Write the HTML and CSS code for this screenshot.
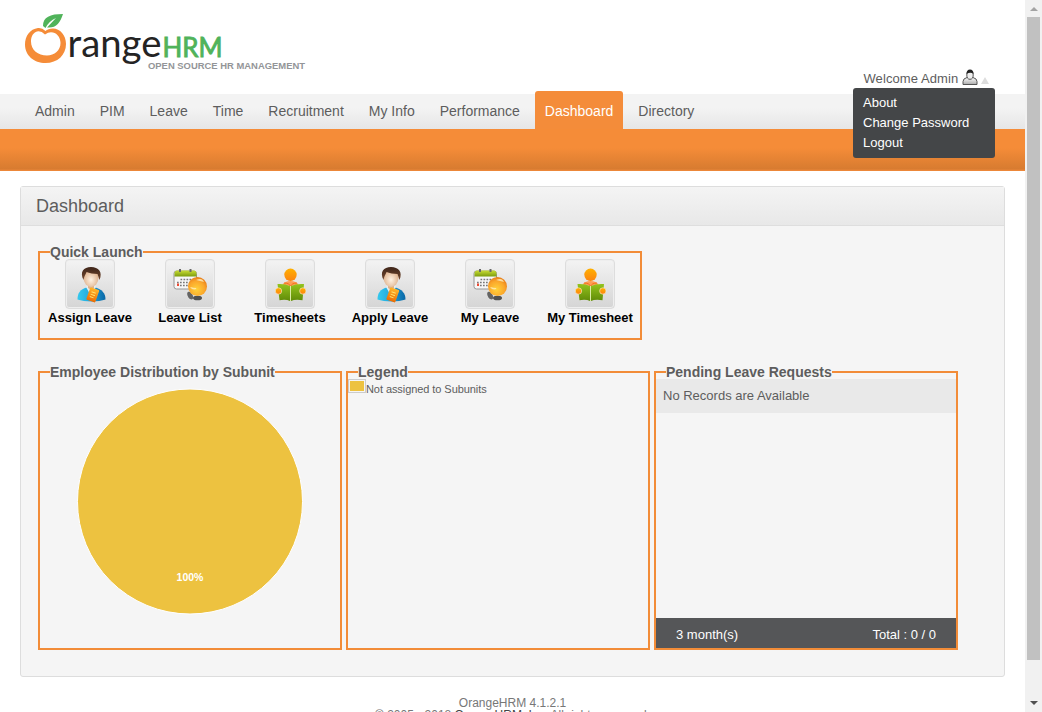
FILE: index.html
```html
<!DOCTYPE html>
<html lang="en">
<head>
<meta charset="utf-8">
<title>OrangeHRM</title>
<link rel="stylesheet" href="styles.css">
</head>
<body>
<svg class="defs" width="0" height="0" aria-hidden="true">
  <defs>
    <linearGradient id="blue"><stop offset="0" stop-color="#35c9ee"/><stop offset=".45" stop-color="#22a8dd"/><stop offset="1" stop-color="#0966a5"/></linearGradient>
    <radialGradient id="face" cx=".5" cy=".6" r=".6"><stop offset="0" stop-color="#fff3e4"/><stop offset="1" stop-color="#dba981"/></radialGradient>
    <linearGradient id="hair" x2="0" y2="1"><stop offset="0" stop-color="#3e2519"/><stop offset="1" stop-color="#75492f"/></linearGradient>
    <linearGradient id="tag" x2="0" y2="1"><stop offset="0" stop-color="#ffb52b"/><stop offset="1" stop-color="#ea6c05"/></linearGradient>
    <linearGradient id="lime" x2="0" y2="1"><stop offset="0" stop-color="#c9dd36"/><stop offset="1" stop-color="#7b9c0c"/></linearGradient>
    <radialGradient id="ball" cx=".45" cy=".65" r=".65"><stop offset="0" stop-color="#ffd23b"/><stop offset=".65" stop-color="#fba72b"/><stop offset="1" stop-color="#e77d19"/></radialGradient>
    <linearGradient id="book" x2="0" y2="1"><stop offset="0" stop-color="#94c41d"/><stop offset="1" stop-color="#608a08"/></linearGradient>
    <linearGradient id="sun" x2="0" y2="1"><stop offset="0" stop-color="#ffb000"/><stop offset="1" stop-color="#fc8410"/></linearGradient>
    <linearGradient id="user" x2="0" y2="1"><stop offset="0" stop-color="#fff"/><stop offset="1" stop-color="#aaa"/></linearGradient>
    <symbol id="person" viewBox="0 0 48 48">
      <path d="M11.500 39.500c0-7 3-10 9-12h9c6 2 10 5 10 12-7 2.500-21 2.500-28 0z" fill="url(#blue)"/>
      <path d="M20 27l5 9 5-9-2-3h-6z" fill="#e5eef2"/>
      <path d="M22 22h6v6l-3 2-3-2z" fill="#dfb189"/>
      <ellipse cx="25" cy="18" rx="7.500" ry="9" fill="url(#face)"/>
      <path d="M17.500 20c-4-8 0-13 7.500-13s12 5 8.500 13l-2-6c-4 0-8-1-11-2-1 3-2 3-3 8z" fill="url(#hair)"/>
      <g transform="rotate(20 27 35)"><rect x="22" y="28.500" width="9.500" height="13" rx="1" fill="url(#tag)"/><path d="M24.500 32.500h4.500M24.500 35h4.500M24.500 37.500h4" stroke="#ffe36e" stroke-width="1"/></g>
    </symbol>
    <symbol id="calendar" viewBox="0 0 48 48">
      <rect x="8" y="11" width="22.500" height="18" rx="2.500" fill="#f7f7f7" stroke="#969696"/>
      <path d="M8.500 16.500v-3q0-3 3-3h16q3 0 3 3v3z" fill="url(#lime)"/>
      <path d="M14 9v3M24.500 9v3" stroke="#686868" stroke-width="2"/>
      <path d="M14.500 19.500h13M11 22.500h15M14 25.500h8" stroke="#777" stroke-width="1.400" stroke-dasharray="1.700 1.300"/>
      <rect x="11" y="23.500" width="2" height="2.500" fill="#ec4b35"/>
      <path d="M22 32c2-1 4 1 5 4s-1 4-3 3-4-6-2-7z" fill="#646464"/><ellipse cx="31.500" cy="38" rx="4.500" ry="2.300" fill="#515151"/>
      <circle cx="31.500" cy="26.500" r="9.500" fill="url(#ball)"/>
      <path d="M24.500 27q3 1 6 1-1 3-6 0zM30 20q6-3 8 2" fill="#fff0be" opacity=".8"/>
    </symbol>
    <symbol id="reader" viewBox="0 0 48 48">
      <circle cx="24.500" cy="14.800" r="6.200" fill="url(#sun)"/>
      <path d="M16.500 25q2-4 8-4t8 4l-8 1z" fill="#ff9d55"/><path d="M18 23q6 0 6.500 4 1-4 6.500-4" fill="none" stroke="#f2711a"/>
      <path d="M11.500 24q7.500-.5 12.500 2v15q-4-2-10.500-.8zM38 24q-8-.5-13 2v15q4-2 11.500-.8z" fill="url(#book)"/>
      <path d="M24.500 26v15" stroke="#dceba7"/>
      <circle cx="12.500" cy="31" r="3.200" fill="url(#sun)" stroke="#f5f0d7" stroke-width=".6"/><circle cx="36.800" cy="31" r="3.200" fill="url(#sun)" stroke="#f5f0d7" stroke-width=".6"/>
    </symbol>
  </defs>
</svg>
<div class="page">
  <header class="top">
    <svg class="logo" width="300" height="70" viewBox="20 5 300 70">
      <path fill-rule="evenodd" fill="#f58c38" d="M38 28C30 29 25 36 25 44.500 25 55.500 34 63 45.500 63 57.500 63 66 55 66 44 66 35 60 28.500 53 28.500Q48 28.500 45.500 31 42 27.500 38 28zM37 31.500Q41 30.500 45 34.500 49 31.500 53 32.500C57.500 33.500 60.500 38 60.500 43 60.500 50.500 54.500 55.500 47 55.500 38 55.500 31 50 31 41.500 31 36 33.500 32.500 37 31.500z"/>
      <path fill="#50b35a" d="M43 26C43 17 50 14 63 14 60 23 56 28.500 47 27.500L56 18Q49 21 45.500 28z"/>
      <text x="67.500" y="57" class="logo-range" textLength="94" lengthAdjust="spacingAndGlyphs">range</text>
      <text x="162.500" y="56.500" class="logo-hrm" textLength="60" lengthAdjust="spacingAndGlyphs">HRM</text>
      <text x="148" y="68.500" class="logo-tag" textLength="157" lengthAdjust="spacingAndGlyphs">OPEN SOURCE HR MANAGEMENT</text>
    </svg>
    <div class="account">
      <span>Welcome Admin</span>
      <svg class="user" width="16" height="17" viewBox="0 0 16 17"><path d="M1 15.500v-3q0-3 4-4h6q4 1 4 4v3z" fill="url(#user)" stroke="#555"/><ellipse cx="8" cy="6" rx="3.200" ry="4.300" fill="#eee" stroke="#555"/><path d="M4.500 5q0-4.500 3.500-4.500t3.500 4.500q-3-2.500-7 0z" fill="#222"/></svg>
      <i class="caret"></i>
      <div class="menu"><a>About</a><a>Change Password</a><a>Logout</a></div>
    </div>
  </header>
  <nav class="nav"><a>Admin</a><a>PIM</a><a>Leave</a><a>Time</a><a>Recruitment</a><a>My Info</a><a>Performance</a><a class="active">Dashboard</a><a>Directory</a></nav>
  <div class="band"></div>
  <main class="panel">
    <h1>Dashboard</h1>
    <div class="content">
      <section class="box quick"><h2>Quick Launch</h2>
        <a class="launch"><svg class="tile"><use href="#person"/></svg><span>Assign Leave</span></a>
        <a class="launch"><svg class="tile"><use href="#calendar"/></svg><span>Leave List</span></a>
        <a class="launch"><svg class="tile"><use href="#reader"/></svg><span>Timesheets</span></a>
        <a class="launch"><svg class="tile"><use href="#person"/></svg><span>Apply Leave</span></a>
        <a class="launch"><svg class="tile"><use href="#calendar"/></svg><span>My Leave</span></a>
        <a class="launch"><svg class="tile"><use href="#reader"/></svg><span>My Timesheet</span></a>
      </section>
      <div class="widgets">
        <section class="box"><h2>Employee Distribution by Subunit</h2>
          <svg class="pie" width="300" height="275" viewBox="0 0 300 275"><circle cx="150" cy="128.500" r="112.500" fill="#edc240" stroke="#fff" stroke-width="1"/><text x="150" y="208" text-anchor="middle">100%</text></svg>
        </section>
        <section class="box"><h2>Legend</h2><div class="key"><i class="swatch"></i>Not assigned to Subunits</div></section>
        <section class="box pending"><h2>Pending Leave Requests</h2><div class="empty">No Records are Available</div><div class="totals"><span>3 month(s)</span><span>Total : 0 / 0</span></div></section>
      </div>
    </div>
  </main>
  <footer class="footer">OrangeHRM 4.1.2.1<br>© 2005 - 2018 <a>OrangeHRM, Inc</a>. All rights reserved.</footer>
</div>
<div class="scrollbar"><i class="up"></i><div class="thumb"></div><i class="down"></i></div>
</body>
</html>
```
FILE: styles.css
```css
* { box-sizing: border-box; }
body { margin: 0; width: 1042px; height: 712px; overflow: hidden; display: flex; background: #fff; color: #5d5d5d; font-family: "Liberation Sans", Arial, sans-serif; }
.defs { position: absolute; }
.page { width: 1025px; height: 712px; overflow: hidden; }
.top { height: 94px; display: flex; justify-content: space-between; padding: 5px 30px 0 20px; }
.logo-range { font: 39px Lato, sans-serif; fill: #242424; }
.logo-hrm { font: 26px Lato, sans-serif; fill: #50b35a; stroke: #50b35a; stroke-width: .9; }
.logo-tag { font: bold 9.5px "Liberation Sans", sans-serif; fill: #939598; }
.account { position: relative; width: 142px; height: 83px; padding: 64px 0 0 10.5px; display: flex; align-items: flex-start; font-size: 13px; line-height: 19px; letter-spacing: .08px; white-space: nowrap; }
.user { margin: 0 0 0 4px; flex: none; }
.caret { margin: 8px 0 0 3px; border: 4px solid transparent; border-top: 0; border-bottom: 7px solid #ddd; }
.menu { position: absolute; left: 0; top: 83px; width: 142px; height: 70px; padding: 5px 10px; background: #444648; border-radius: 3px; color: #fff; z-index: 2; letter-spacing: 0; }
.menu a { display: block; line-height: 20px; }
.nav { height: 35px; padding-left: 25px; display: flex; align-items: flex-end; gap: 5px; background: linear-gradient(#f3f3f3 40%, #e6e6e6); font-size: 14px; }
.nav a { padding: 0 10px; height: 38px; line-height: 40px; flex: none; }
.nav .active { background: #f48c3a; color: #fff; border-radius: 3px 3px 0 0; }
.band { height: 42px; background: linear-gradient(#f58c38 45%, #d77b30 96%, #ec8739 97%); }
.panel { width: 985px; height: 491px; margin: 15px 0 0 20px; border: 1px solid #ddd; border-radius: 3px; background: #f5f5f5; }
.panel h1 { margin: 0; height: 39px; padding-left: 15px; border-bottom: 1px solid #dedede; font-size: 18px; font-weight: normal; line-height: 38px; background: linear-gradient(#f4f4f4, #e8e8e8); }
.content { padding: 25px 0 0 17px; }
.box { position: relative; border: 2px solid #f28c38; width: 304px; height: 279px; }
.box h2 { position: absolute; left: 10px; top: -8px; margin: 0; background: #f5f5f5; font-size: 14px; line-height: 14px; white-space: nowrap; }
.quick { width: 604px; height: 89px; display: flex; }
.launch { width: 100px; padding-top: 6px; display: flex; flex-direction: column; align-items: center; color: #000; font-size: 13px; font-weight: bold; white-space: nowrap; }
.tile { width: 50px; height: 50px; border: 1px solid #ddd; border-radius: 4px; background: linear-gradient(#f3f3f3, #d5d5d5); box-shadow: inset 0 0 0 1px #eee; }
.launch span { line-height: 18px; }
.widgets { display: flex; gap: 4px; margin-top: 31px; }
.pie { display: block; }
.pie text { font-size: 10.5px; font-weight: bold; fill: #fff; }
.key { display: flex; margin-top: 6px; font-size: 11px; line-height: 20px; height: 20px; letter-spacing: -.07px; }
.swatch { width: 18px; height: 14px; border: 1px solid #ccc; padding: 1px; background: #edc240 content-box; }
.pending { display: flex; flex-direction: column; justify-content: space-between; }
.empty { margin-top: 6px; height: 34px; padding-left: 7px; line-height: 33px; background: #e9e9e9; font-size: 13px; }
.totals { height: 30px; padding: 0 20px; display: flex; justify-content: space-between; background: #555658; color: #fff; font-size: 13px; line-height: 33px; }
.footer { padding-top: 20px; text-align: center; color: #777; font-size: 12px; line-height: 12px; }
.footer a { color: #444; }
.scrollbar { width: 17px; height: 712px; padding: 7px 2px; display: flex; flex-direction: column; align-items: center; justify-content: space-between; background: #f1f1f1; }
.thumb { width: 13px; height: 643px; background: #c1c1c1; margin-bottom: 36px; }
.up, .down { border: 4px solid transparent; flex: none; }
.up { border-top: 0; border-bottom-color: #a3a3a3; }
.down { border-bottom: 0; border-top-color: #505050; }
```
